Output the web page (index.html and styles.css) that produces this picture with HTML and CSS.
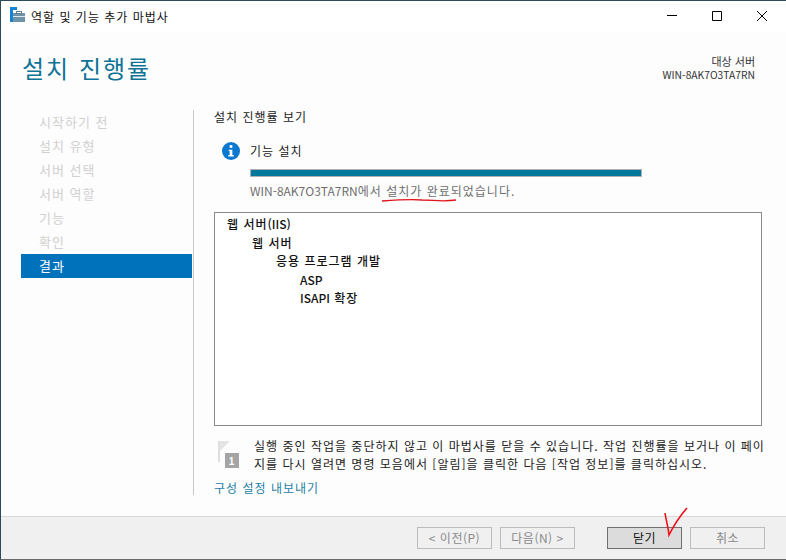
FILE: index.html
```html
<!DOCTYPE html>
<html lang="ko">
<head>
    <meta charset="UTF-8">
    <title>역할 및 기능 추가 마법사</title>
    <link rel="stylesheet" href="styles.css">
</head>
<body>
    <div class="window">
        <div class="titlebar">
            <svg class="app-icon" width="15" height="15" viewBox="0 0 15 15">
                <rect x="0" y="0" width="7" height="3" fill="#1484d6"/>
                <rect x="0" y="3" width="3" height="12" fill="#1484d6"/>
                <rect x="3" y="6" width="12" height="9" fill="#7193aa"/>
                <rect x="6.5" y="4.5" width="5" height="2" fill="none" stroke="#5f8299"/>
                <rect x="3" y="9" width="12" height="1" fill="#dfe8ee"/>
            </svg>
            <span class="title-text">역할 및 기능 추가 마법사</span>
            <div class="win-controls">
                <svg width="12" height="12" viewBox="0 0 12 12"><path d="M1 5.5h10" stroke="#000" fill="none"/></svg>
                <svg width="12" height="12" viewBox="0 0 12 12"><path d="M1.5 1.5h9v9h-9z" stroke="#000" fill="none"/></svg>
                <svg width="12" height="12" viewBox="0 0 12 12"><path d="M1 1l10 10M11 1L1 11" stroke="#000" fill="none"/></svg>
            </div>
        </div>
        <div class="content">
            <div class="header">
                <h1>설치 진행률</h1>
                <div class="target">
                    <div>대상 서버</div>
                    <div class="target-name">WIN-8AK7O3TA7RN</div>
                </div>
            </div>
            <div class="columns">
                <div class="sidebar">
                    <div class="step">시작하기 전</div>
                    <div class="step">설치 유형</div>
                    <div class="step">서버 선택</div>
                    <div class="step">서버 역할</div>
                    <div class="step">기능</div>
                    <div class="step">확인</div>
                    <div class="step active">결과</div>
                </div>
                <div class="panel">
                    <div class="panel-title">설치 진행률 보기</div>
                    <div class="status">
                        <svg class="info-icon" width="18" height="18" viewBox="0 0 20 20">
                            <circle cx="10" cy="10" r="10" fill="#0b78d0"/>
                            <rect x="8.5" y="3.5" width="3" height="3" fill="#fff"/>
                            <path d="M7.5 8.5h4v6h1.5v1.5h-6v-1.5h1.5v-4.5h-1z" fill="#fff"/>
                        </svg>
                        <span>기능 설치</span>
                    </div>
                    <div class="progress"><div class="progress-fill"></div></div>
                    <div class="status-msg"><span class="en">WIN-8AK7O3TA7RN</span>에서 설치가 완료되었습니다.</div>
                    <div class="result-box">
                        <div class="tree-item">웹 서버<span class="en">(IIS)</span></div>
                        <div class="tree-item level1">웹 서버</div>
                        <div class="tree-item level2">응용 프로그램 개발</div>
                        <div class="tree-item level3"><span class="en">ASP</span></div>
                        <div class="tree-item level3"><span class="en">ISAPI</span> 확장</div>
                    </div>
                    <div class="notice">
                        <svg class="flag-icon" width="26" height="29" viewBox="0 0 26 29">
                            <rect x="4" y="1" width="2" height="21" fill="#dedede"/>
                            <path d="M6 1h10L6 11z" fill="#e4e4e4"/>
                            <rect x="11" y="13" width="14" height="15" fill="#a4a4a4"/>
                            <text x="18" y="25" class="flag-num">1</text>
                        </svg>
                        <p>실행 중인 작업을 중단하지 않고 이 마법사를 닫을 수 있습니다. 작업 진행률을 보거나 이 페이<br>지를 다시 열려면 명령 모음에서 [알림]을 클릭한 다음 [작업 정보]를 클릭하십시오.</p>
                    </div>
                    <a class="export-link">구성 설정 내보내기</a>
                </div>
            </div>
        </div>
        <div class="footer">
            <button class="btn" disabled>&lt; 이전(P)</button>
            <button class="btn btn-next" disabled>다음(N) &gt;</button>
            <button class="btn btn-close">닫기</button>
            <button class="btn btn-cancel" disabled>취소</button>
        </div>
        <svg class="marks" width="786" height="560" viewBox="0 0 786 560">
            <path d="M382 201c14-1 28-2 40-1 12 0 20 2 34 0" stroke="#e0141c" stroke-width="1.3" fill="none"/>
            <path d="M665 513c1 7 3 13 4 22 5-10 11-19 18-27" stroke="#f01018" stroke-width="1.6" fill="none"/>
        </svg>
    </div>
</body>
</html>
```

FILE: styles.css
```css
* {
    box-sizing: border-box;
}
body {
    margin: 0;
    font-family: "Noto Sans CJK KR", "Liberation Sans", sans-serif;
    font-size: 12px;
    letter-spacing: 1px;
    color: #1a1a1a;
}
.en {
    letter-spacing: 0;
}
.window {
    position: relative;
    width: 786px;
    height: 560px;
    display: flex;
    flex-direction: column;
    background-color: #fdfdfd;
    border-top: 1px solid #2b4a5c;
    border-left: 1px solid #2b4a5c;
    border-bottom: 1px solid #6a6a6a;
}
.titlebar {
    height: 30px;
    flex: none;
    display: flex;
    align-items: center;
    padding-left: 9px;
    background-color: #fff;
}
.app-icon {
    margin-right: 6px;
    margin-bottom: 3px;
}
.title-text {
    color: #111;
}
.win-controls {
    margin-left: auto;
    display: flex;
    gap: 33px;
    padding-right: 18px;
}
.content {
    flex: 1;
    min-height: 0;
    display: flex;
    flex-direction: column;
}
.header {
    height: 79px;
    flex: none;
    display: flex;
    justify-content: space-between;
    padding: 21px 31px 0 21px;
}
.header h1 {
    margin: 0;
    font-size: 24px;
    font-weight: 400;
    line-height: 32px;
    letter-spacing: 2px;
    color: #0f7396;
}
.target {
    text-align: right;
    font-size: 11px;
    line-height: 14px;
    padding-top: 2px;
    letter-spacing: 0;
    color: #333;
}
.target-name {
    font-size: 10.3px;
}
.columns {
    flex: 1;
    min-height: 0;
    display: flex;
}
.sidebar {
    width: 193px;
    flex: none;
    height: 385px;
    padding: 0 0 0 20px;
    border-right: 1px solid #c8c8c8;
}
.step {
    width: 171px;
    height: 24px;
    line-height: 24px;
    padding-left: 18px;
    font-size: 13px;
    color: #d0d0d0;
}
.step.active {
    background-color: #0072bc;
    color: #fff;
}
.panel {
    flex: 1;
    min-width: 0;
    padding-left: 20px;
    padding-right: 24px;
}
.panel-title {
    line-height: 16px;
    margin-top: -1px;
    color: #222;
}
.status {
    display: flex;
    align-items: center;
    margin-top: 16px;
    padding-left: 8px;
    height: 20px;
    gap: 10px;
}
.status span {
    margin-top: -2px;
}
.progress {
    margin-top: 8px;
    margin-left: 36px;
    width: 392px;
    height: 8px;
    background-color: #b0b0b0;
    padding: 1px;
}
.progress-fill {
    height: 100%;
    background-color: #00789c;
}
.status-msg {
    margin-top: 5px;
    margin-left: 36px;
    line-height: 17px;
    color: #6e6e6e;
}
.result-box {
    margin-top: 13px;
    height: 214px;
    border: 1px solid #8a8a8a;
    background-color: #fff;
    padding-top: 2px;
}
.tree-item {
    height: 18.5px;
    line-height: 18px;
    padding-left: 12px;
    font-weight: 500;
    color: #111;
}
.level1 {
    padding-left: 37px;
}
.level2 {
    padding-left: 61px;
}
.level3 {
    padding-left: 85px;
}
.notice {
    display: flex;
    margin-top: 11px;
}
.flag-icon {
    flex: none;
    margin-top: 3px;
}
.flag-num {
    font-family: "Liberation Sans", sans-serif;
    font-size: 10px;
    font-weight: 700;
    fill: #fff;
    text-anchor: middle;
}
.notice p {
    margin: 0 0 0 14px;
    line-height: 18px;
    white-space: nowrap;
    color: #222;
}
.export-link {
    display: block;
    margin-top: 6px;
    color: #1f7ea6;
}
.footer {
    height: 43px;
    flex: none;
    display: flex;
    align-items: center;
    padding-left: 416px;
    gap: 8px;
    background-color: #f0f0f0;
    border-top: 1px solid #d8d8d8;
}
.btn {
    width: 75px;
    height: 22px;
    padding: 0;
    font-family: inherit;
    font-size: 12px;
    line-height: 18px;
    letter-spacing: 0.5px;
    color: #8a8a8a;
    background-color: #f0f0f0;
    border: 1px solid #bcbcbc;
}
.btn-close {
    margin-left: 24px;
    color: #111;
    background-color: #dcdcdc;
    border-color: #707070;
}
.marks {
    position: absolute;
    top: -1px;
    left: -1px;
    pointer-events: none;
}
```
